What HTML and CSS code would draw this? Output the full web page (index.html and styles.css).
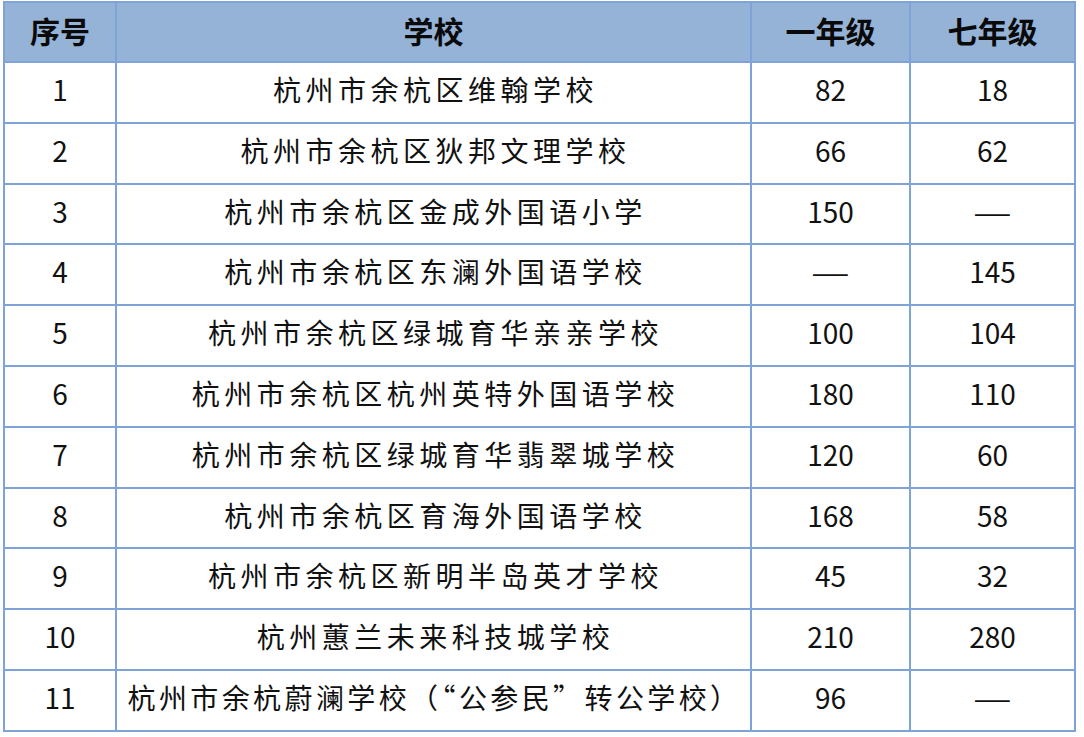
FILE: index.html
```html
<!DOCTYPE html>
<html lang="zh">
<head>
<meta charset="utf-8">
<link rel="stylesheet" href="styles.css">
</head>
<body>
<table class="grid">
  <colgroup>
    <col class="c-no"><col class="c-school"><col class="c-g1"><col class="c-g7">
  </colgroup>
  <thead>
    <tr><th>序号</th><th>学校</th><th>一年级</th><th>七年级</th></tr>
  </thead>
  <tbody>
    <tr><td class="num">1</td><td class="name">杭州市余杭区维翰学校</td><td class="num">82</td><td class="num">18</td></tr>
    <tr><td class="num">2</td><td class="name">杭州市余杭区狄邦文理学校</td><td class="num">66</td><td class="num">62</td></tr>
    <tr><td class="num">3</td><td class="name">杭州市余杭区金成外国语小学</td><td class="num">150</td><td class="num"><span class="dash">—</span></td></tr>
    <tr><td class="num">4</td><td class="name">杭州市余杭区东澜外国语学校</td><td class="num"><span class="dash">—</span></td><td class="num">145</td></tr>
    <tr><td class="num">5</td><td class="name">杭州市余杭区绿城育华亲亲学校</td><td class="num">100</td><td class="num">104</td></tr>
    <tr><td class="num">6</td><td class="name">杭州市余杭区杭州英特外国语学校</td><td class="num">180</td><td class="num">110</td></tr>
    <tr><td class="num">7</td><td class="name">杭州市余杭区绿城育华翡翠城学校</td><td class="num">120</td><td class="num">60</td></tr>
    <tr><td class="num">8</td><td class="name">杭州市余杭区育海外国语学校</td><td class="num">168</td><td class="num">58</td></tr>
    <tr><td class="num">9</td><td class="name">杭州市余杭区新明半岛英才学校</td><td class="num">45</td><td class="num">32</td></tr>
    <tr><td class="num">10</td><td class="name">杭州蕙兰未来科技城学校</td><td class="num">210</td><td class="num">280</td></tr>
    <tr><td class="num">11</td><td class="name tight">杭州市余杭蔚澜学校（“公参民”转公学校）</td><td class="num">96</td><td class="num"><span class="dash">—</span></td></tr>
  </tbody>
</table>
</body>
</html>
```
FILE: styles.css
```css
html, body {
  margin: 0;
  padding: 0;
  background: #ffffff;
}
body {
  padding: 1px 0 0 3px;
  font-family: "Noto Sans CJK SC", "Noto Sans", sans-serif;
  color: #111111;
}
.grid {
  border-collapse: collapse;
  table-layout: fixed;
  width: 1071px;
}
.c-no { width: 112px; }
.c-school { width: 635px; }
.c-g1 { width: 159px; }
.c-g7 { width: 165px; }
.grid th, .grid td {
  border: 2px solid #80a3d7;
  text-align: center;
  padding: 0 0 5px 0;
  white-space: nowrap;
  overflow: hidden;
  line-height: 1.2;
}
.grid thead tr { height: 60px; }
.grid th {
  background: #95b3d7;
  font-size: 30px;
  font-weight: 700;
  color: #0a0a0a;
}
.grid tbody tr { height: 60.8px; }
.grid td {
  font-size: 28px;
  font-weight: 400;
}
.grid td.name {
  letter-spacing: 4.5px;
  padding-left: 4px;
}
.grid td.name.tight {
  letter-spacing: 3.4px;
  padding-left: 2px;
}
.dash {
  display: inline-block;
  transform: scaleX(1.55);
}
```
